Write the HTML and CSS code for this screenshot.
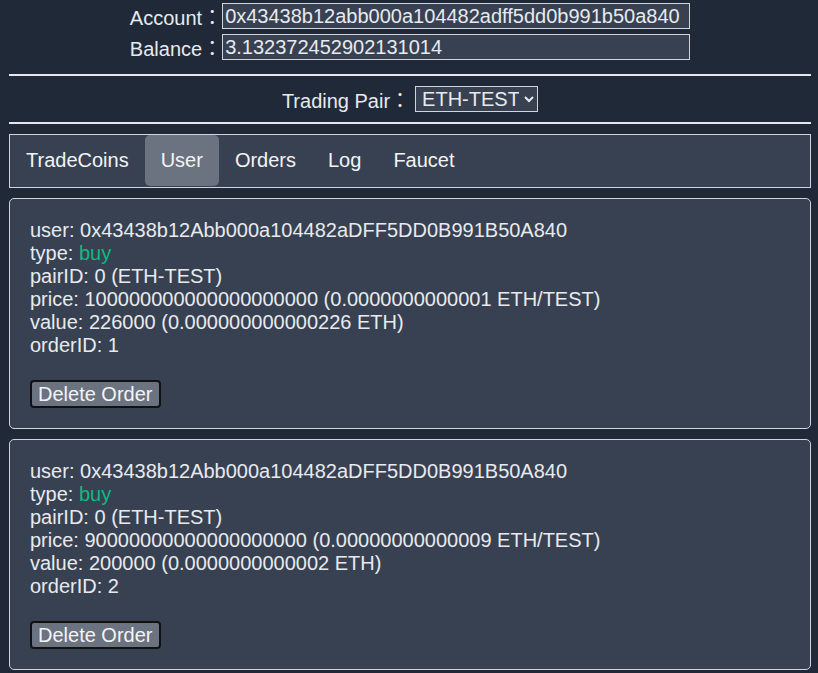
FILE: index.html
```html
<!DOCTYPE html>
<html lang="en">
<head>
    <meta charset="UTF-8">
    <meta name="viewport" content="width=device-width, initial-scale=1.0">
    <title>DEX</title>
    <link rel="stylesheet" href="styles.css">
</head>
<body>
    <div class="wallet">
        <div class="wallet-row">
            <label for="account">Account：</label>
            <input type="text" id="account" value="0x43438b12abb000a104482adff5dd0b991b50a840" readonly>
        </div>
        <div class="wallet-row">
            <label for="balance">Balance：</label>
            <input type="text" id="balance" value="3.132372452902131014" readonly>
        </div>
    </div>

    <hr>

    <div class="pair-row">
        <label for="pair">Trading Pair：</label>
        <select id="pair">
            <option>ETH-TEST</option>
        </select>
    </div>

    <hr>

    <nav class="tabs">
        <a class="tab">TradeCoins</a>
        <a class="tab active">User</a>
        <a class="tab">Orders</a>
        <a class="tab">Log</a>
        <a class="tab">Faucet</a>
    </nav>

    <div class="order">
        <div>user: 0x43438b12Abb000a104482aDFF5DD0B991B50A840</div>
        <div>type: <span class="buy">buy</span></div>
        <div>pairID: 0 (ETH-TEST)</div>
        <div>price: 100000000000000000000 (0.0000000000001 ETH/TEST)</div>
        <div>value: 226000 (0.000000000000226 ETH)</div>
        <div>orderID: 1</div>
        <button type="button">Delete Order</button>
    </div>

    <div class="order">
        <div>user: 0x43438b12Abb000a104482aDFF5DD0B991B50A840</div>
        <div>type: <span class="buy">buy</span></div>
        <div>pairID: 0 (ETH-TEST)</div>
        <div>price: 90000000000000000000 (0.00000000000009 ETH/TEST)</div>
        <div>value: 200000 (0.0000000000002 ETH)</div>
        <div>orderID: 2</div>
        <button type="button">Delete Order</button>
    </div>
</body>
</html>
```

FILE: styles.css
```css
body {
    margin: 0 7px 0 9px;
    padding-top: 3px;
    background-color: #1f2937;
    color: #e8eaee;
    font-family: "Liberation Sans", Arial, "Noto Sans CJK TC", sans-serif;
    font-size: 20px;
}
.wallet {
    display: flex;
    flex-direction: column;
    gap: 5px;
}
.wallet-row, .pair-row {
    display: flex;
    justify-content: center;
    align-items: center;
    height: 26px;
}
input[type="text"] {
    box-sizing: border-box;
    width: 468px;
    height: 26px;
    padding: 0 2px;
    border: 1px solid #d1d5db;
    background-color: #374151;
    color: #e8eaee;
    font: inherit;
    outline: none;
}
hr {
    height: 0;
    margin: 14px 0 10px;
    border: none;
    border-top: 2px solid #e5e7eb;
}
hr + .pair-row + hr {
    margin-top: 10px;
}
select {
    box-sizing: border-box;
    width: 123px;
    height: 26px;
    margin-left: 5px;
    padding: 0 2px;
    border: 1px solid #d1d5db;
    border-radius: 0;
    background-color: #374151;
    color: #e8eaee;
    font: inherit;
}
.tabs {
    display: flex;
    margin-top: 10px;
    border: 1px solid #d1d5db;
    background-color: #374151;
    padding-bottom: 1px;
}
.tab {
    padding: 0 16px;
    line-height: 51px;
    border-radius: 5px;
    color: #f3f4f6;
    cursor: pointer;
}
.tab.active {
    background-color: #6b7280;
}
.order {
    margin-top: 10px;
    padding: 20px;
    border: 1px solid #d1d5db;
    border-radius: 5px;
    background-color: #374151;
}
.buy {
    color: #10b981;
}
.order button {
    display: block;
    height: 28px;
    margin-top: 23px;
    padding: 0 6px;
    border: 2px solid #111;
    border-radius: 4px;
    background-color: #6b7280;
    color: #f3f4f6;
    font: inherit;
    cursor: pointer;
}
```
